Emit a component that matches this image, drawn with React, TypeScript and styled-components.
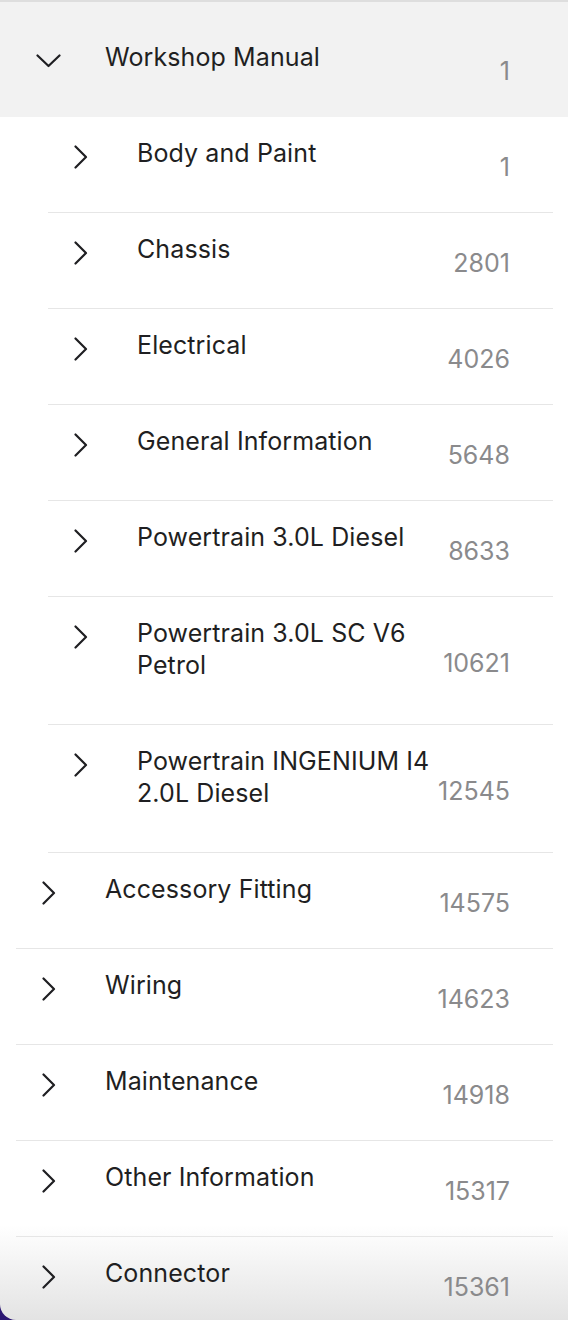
import React from "react";
import styled, { createGlobalStyle } from "styled-components";

const Global = createGlobalStyle`
  html, body { margin: 0; padding: 0; background: #2b1672; }
  * { box-sizing: border-box; }
  body { font-family: Inter, "Noto Sans", "Liberation Sans", sans-serif; }
`;

const Panel = styled.div`
  width: 568px;
  height: 1320px;
  overflow: hidden;
  background: linear-gradient(to bottom, #ffffff calc(100% - 95px), #e3e3e3 100%);
  border-top: 2px solid #dedede;
  border-bottom-left-radius: 16px;
  display: flex;
  flex-direction: column;
`;

const Header = styled.div`
  background: #f2f2f2;
  padding: 39px 15px 44px 16px;
  display: flex;
  align-items: center;
  flex-shrink: 0;
`;

const Row = styled.div<{ $indent: number }>`
  margin-left: ${(p) => p.$indent}px;
  margin-right: 15px;
  padding: 20px 0 43px 0;
  border-bottom: 1px solid #e6e6e6;
  display: flex;
  align-items: center;
  flex-shrink: 0;
`;

const ChevronBox = styled.div`
  width: 89px;
  height: 32px;
  flex-shrink: 0;
  align-self: flex-start;
  padding-top: 8px;
  padding-left: 26px;
  display: flex;
  align-items: flex-start;
`;

const DownBox = styled(ChevronBox)`
  padding-left: 20px;
  padding-top: 13px;
`;

const Title = styled.div`
  flex: 1;
  font-size: 25px;
  line-height: 32px;
  color: #1f1f22;
  letter-spacing: 0.1px;
  white-space: nowrap;
`;

const Count = styled.div`
  line-height: 32px;
  margin-top: 14px;
  margin-bottom: -14px;
  padding-right: 43px;
  font-size: 25px;
  color: #8a8a8c;
  text-align: right;
  white-space: nowrap;
`;

const ChevronRight = () => (
  <svg width="14" height="24" viewBox="0 0 14 24" fill="none">
    <path d="M1.5 1.5 L12 12 L1.5 22.5" stroke="#1f1f22" strokeWidth="2.2" strokeLinecap="round" strokeLinejoin="round" />
  </svg>
);

const ChevronDown = () => (
  <svg width="25" height="14" viewBox="0 0 25 14" fill="none">
    <path d="M1.5 1.5 L12.5 12 L23.5 1.5" stroke="#1f1f22" strokeWidth="2.2" strokeLinecap="round" strokeLinejoin="round" />
  </svg>
);

type Item = { title: React.ReactNode; count: string };

const children: Item[] = [
  { title: "Body and Paint", count: "1" },
  { title: "Chassis", count: "2801" },
  { title: "Electrical", count: "4026" },
  { title: "General Information", count: "5648" },
  { title: "Powertrain 3.0L Diesel", count: "8633" },
  { title: <>Powertrain 3.0L SC V6<br />Petrol</>, count: "10621" },
  { title: <>Powertrain INGENIUM I4<br />2.0L Diesel</>, count: "12545" },
];

const topLevel: Item[] = [
  { title: "Accessory Fitting", count: "14575" },
  { title: "Wiring", count: "14623" },
  { title: "Maintenance", count: "14918" },
  { title: "Other Information", count: "15317" },
  { title: "Connector", count: "15361" },
];

export default function App() {
  return (
    <>
      <Global />
      <Panel>
        <Header>
          <DownBox>
            <ChevronDown />
          </DownBox>
          <Title>Workshop Manual</Title>
          <Count>1</Count>
        </Header>
        {children.map((c, i) => (
          <Row key={"c" + i} $indent={48}>
            <ChevronBox>
              <ChevronRight />
            </ChevronBox>
            <Title>{c.title}</Title>
            <Count>{c.count}</Count>
          </Row>
        ))}
        {topLevel.map((c, i) => (
          <Row key={"t" + i} $indent={16}>
            <ChevronBox>
              <ChevronRight />
            </ChevronBox>
            <Title>{c.title}</Title>
            <Count>{c.count}</Count>
          </Row>
        ))}
      </Panel>
    </>
  );
}
